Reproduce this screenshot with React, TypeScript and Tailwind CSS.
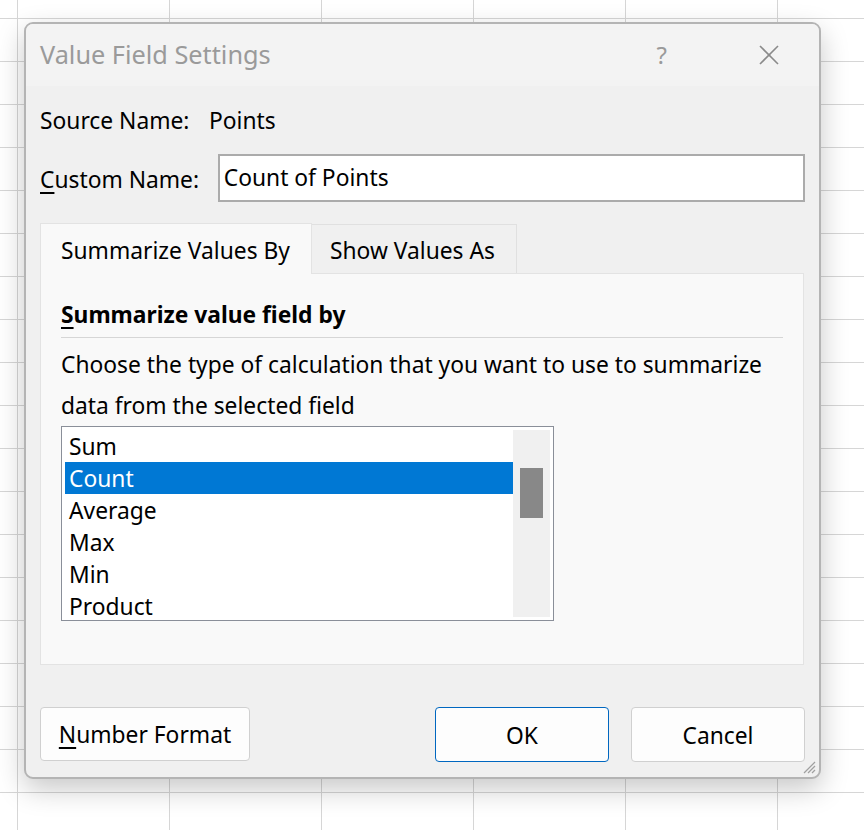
import React from "react";

const font = { fontFamily: '"Noto Sans", "Open Sans", sans-serif' };

function Grip() {
  return (
    <svg width="14" height="14" viewBox="0 0 14 14" className="absolute right-[3px] bottom-[3px]">
      <line x1="13" y1="2" x2="2" y2="13" stroke="#a0a0a0" strokeWidth="1.2" />
      <line x1="13" y1="6" x2="6" y2="13" stroke="#a0a0a0" strokeWidth="1.2" />
      <line x1="13" y1="10" x2="10" y2="13" stroke="#a0a0a0" strokeWidth="1.2" />
    </svg>
  );
}

export default function App() {
  const items = ["Sum", "Count", "Average", "Max", "Min"];
  return (
    <div
      className="w-[864px] h-[830px] overflow-hidden bg-white bg-[linear-gradient(to_right,#d6d6d6_1px,transparent_1px),linear-gradient(to_bottom,#d6d6d6_1px,transparent_1px)] bg-[size:152px_43px] bg-[position:17px_18px] pl-[24px] pt-[22px]"
      style={font}
    >
      <div className="relative w-[797px] h-[757px] rounded-[9px] border-2 border-[#b4b4b4] bg-[#f0f0f0] shadow-[0_10px_28px_rgba(0,0,0,0.22)] text-[22.8px] text-black">
        {/* title bar */}
        <div className="h-[62px] rounded-t-[7px] bg-[#f3f3f3] flex items-center pl-[14px] pr-[40px]">
          <div className="text-[25.3px] text-[#9a9a9a] flex-1">Value Field Settings</div>
          <div className="text-[24px] text-[#9a9a9a] mr-[92px]">?</div>
          <svg width="20" height="20" viewBox="0 0 20 20">
            <line x1="1" y1="1" x2="19" y2="19" stroke="#8a8a8a" strokeWidth="1.6" />
            <line x1="19" y1="1" x2="1" y2="19" stroke="#8a8a8a" strokeWidth="1.6" />
          </svg>
        </div>
        <div className="px-[14px]">
          {/* source name */}
          <div className="flex items-center h-[36px] mt-[16px] pt-[2px]">
            <span className="w-[169px]">Source Name:</span>
            <span>Points</span>
          </div>
          {/* custom name */}
          <div className="flex items-center mt-[16px]">
            <span className="w-[178px] pt-[5px]">
              <span className="underline underline-offset-[4px]">C</span>ustom Name:
            </span>
            <div className="w-[588px] h-[48px] bg-white border-2 border-[#ababab] flex items-center pl-[4px] pt-[1px]">
              Count of Points
            </div>
          </div>
          {/* tabs */}
          <div className="flex items-end mt-[20px] h-[51px]">
            <div className="h-[51px] w-[272px] bg-[#f9f9f9] border border-b-0 border-[#e3e3e3] flex items-center pl-[20px] relative z-10 -mb-px pt-[4px]">
              Summarize Values By
            </div>
            <div className="h-[49px] w-[205px] bg-[#f0f0f0] border border-l-0 border-b-0 border-[#e0e0e0] flex items-center pl-[18px] pt-[5px]">
              Show Values As
            </div>
          </div>
          <div className="w-[764px] h-[392px] bg-[#f9f9f9] border border-[#e3e3e3] px-[20px] pt-[24px]">
            <div className="font-bold">
              <span className="underline underline-offset-[4px]">S</span>ummarize value field by
            </div>
            <div className="h-px bg-[#d6d6d6] mt-[5px]" />
            <div className="leading-[41px] mt-[6px]">
              Choose the type of calculation that you want to use to summarize
              <br />
              data from the selected field
            </div>
            <div className="w-[493px] h-[195px] bg-white border border-[#8a8f99] p-[3px] flex">
              <div className="flex-1">
                {items.map((it) => (
                  <div
                    key={it}
                    className={
                      "h-[32px] flex items-center pl-[4px] pt-[1px] " +
                      (it === "Count" ? "bg-[#0078d4] text-white" : "")
                    }
                  >
                    {it}
                  </div>
                ))}
                <div className="h-[27px] flex items-center pl-[4px] pt-[6px] leading-[21px]">Product</div>
              </div>
              <div className="w-[37px] bg-[#f0f0f0] pt-[38px] flex justify-center">
                <div className="w-[23px] h-[50px] bg-[#888888]" />
              </div>
            </div>
          </div>
          {/* buttons */}
          <div className="flex mt-[42px]">
            <div className="w-[210px] h-[54px] bg-[#fdfdfd] border border-[#d0d0d0] rounded-[4px] flex items-center justify-center pt-[3px]">
              <span>
                <span className="underline underline-offset-[4px]">N</span>umber Format
              </span>
            </div>
            <div className="w-[174px] h-[55px] ml-[185px] bg-[#fdfdfd] border border-[#0067c0] rounded-[4px] flex items-center justify-center pt-[3px]">
              OK
            </div>
            <div className="w-[174px] h-[55px] ml-[22px] bg-[#fdfdfd] border border-[#d0d0d0] rounded-[4px] flex items-center justify-center pt-[3px]">
              Cancel
            </div>
          </div>
        </div>
        <Grip />
      </div>
    </div>
  );
}
